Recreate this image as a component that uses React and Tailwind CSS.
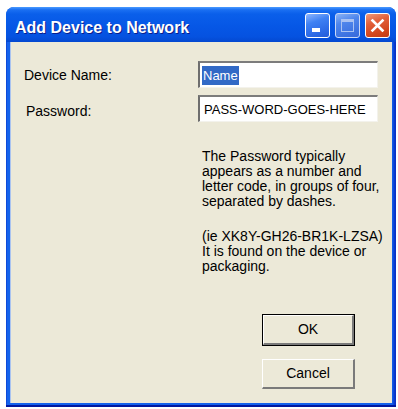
import React from 'react';

const font = { fontFamily: '"Liberation Sans", Arial, sans-serif' };

const TitleButton = ({ kind }) => {
  if (kind === 'close') {
    return (
      <div className="w-[25px] h-[25px] rounded-[3px] border border-white bg-[linear-gradient(160deg,#f19a7c_0%,#e2603a_35%,#d2451c_75%,#c13a16_100%)] flex items-center justify-center">
        <svg width="15" height="15" viewBox="0 0 15 15">
          <path d="M2.5 2.5 L12.5 12.5 M12.5 2.5 L2.5 12.5" stroke="#ffffff" strokeWidth="2.6" strokeLinecap="square" />
        </svg>
      </div>
    );
  }
  if (kind === 'max') {
    return (
      <div className="w-[25px] h-[25px] rounded-[3px] border border-[#c9d8f7] bg-[linear-gradient(160deg,#8ab3f6_0%,#4f86ec_35%,#3e74e2_75%,#3868da_100%)] flex items-center justify-center">
        <div className="w-[13px] h-[13px] border border-[#a9c2f2] border-t-[3px]" />
      </div>
    );
  }
  return (
    <div className="w-[25px] h-[25px] rounded-[3px] border border-white bg-[linear-gradient(160deg,#8db6ff_0%,#3f81f3_35%,#2c69e6_75%,#235bd8_100%)] flex items-end pl-[6px] pb-[5px]">
      <div className="w-[8px] h-[4px] bg-white" />
    </div>
  );
};

export default function App() {
  return (
    <div className="w-[398px] h-[409px] bg-white pt-[7px] pl-[6px]" style={font}>
      <div className="w-[390px] h-[400px] flex flex-col rounded-t-[8px] overflow-hidden bg-[#0a4ee0]">
        <div className="h-[35px] flex items-center justify-between pl-[9px] pr-[6px] bg-[linear-gradient(180deg,#4b9bff_0%,#1a6ff2_8%,#0a5fea_20%,#0657e6_55%,#0552e0_85%,#0448d0_100%)]">
          <span className="text-white font-bold text-[16px] pt-[6px] [text-shadow:1px_1px_0_#0a1e8c]">
            Add Device to Network
          </span>
          <div className="flex gap-[5px] pt-[1px]">
            <TitleButton kind="min" />
            <TitleButton kind="max" />
            <TitleButton kind="close" />
          </div>
        </div>
        <div className="flex-1 px-[4px] pb-[4px] bg-[linear-gradient(90deg,#0832c8_0px,#1462ec_1px,#1462ec_386px,#0832c8_389px)] shadow-[inset_0_-2px_0_#0019a0]">
          <div className="h-full bg-[#ece9d8] shadow-[inset_1px_0_0_#a9c3f0] pt-[19px] pl-[14px] text-[14px] text-black">
            <div className="flex items-center h-[27px]">
              <span className="w-[174px] pt-[1px]">Device Name:</span>
              <div className="w-[180px] h-[27px] bg-white border-t-2 border-l-2 border-t-[#7c7c7c] border-l-[#6e6e6e] border-b border-r border-b-[#f3f2ec] border-r-[#f3f2ec] flex items-center pl-[2px]">
                <span className="bg-[#3169c6] text-white text-[13px] leading-[19px] px-[1px]">Name</span>
              </div>
            </div>
            <div className="flex items-center h-[27px] mt-[7px]">
              <span className="w-[174px] pl-[2px] pt-[5px]">Password:</span>
              <div className="w-[180px] h-[27px] bg-white border-t-2 border-l-2 border-t-[#7c7c7c] border-l-[#6e6e6e] border-b border-r border-b-[#f3f2ec] border-r-[#f3f2ec] flex items-center pl-[4px]">
                <span className="text-[13px] leading-[19px] whitespace-nowrap">PASS-WORD-GOES-HERE</span>
              </div>
            </div>
            <div className="ml-[178px] mt-[27px] leading-[15px] whitespace-nowrap">
              <div>The Password typically</div>
              <div>appears as a number and</div>
              <div>letter code, in groups of four,</div>
              <div>separated by dashes.</div>
              <div className="mt-[20px]">(ie XK8Y-GH26-BR1K-LZSA)</div>
              <div>It is found on the device or</div>
              <div>packaging.</div>
            </div>
            <div className="ml-[238px] mt-[40px] flex flex-col gap-[13px]">
              <button className="w-[93px] h-[32px] border border-black bg-[#ece9d8] flex items-center justify-center text-[14px]">
                <span className="w-full h-full flex items-center justify-center border-t border-l border-white border-b-2 border-r-2 border-b-[#7a7a7a] border-r-[#7a7a7a]">
                  OK
                </span>
              </button>
              <button className="w-[93px] h-[30px] bg-[#ece9d8] border-t border-l border-white border-b-2 border-r-2 border-b-[#7a7a7a] border-r-[#7a7a7a] flex items-center justify-center text-[14px]">
                Cancel
              </button>
            </div>
          </div>
        </div>
      </div>
    </div>
  );
}
